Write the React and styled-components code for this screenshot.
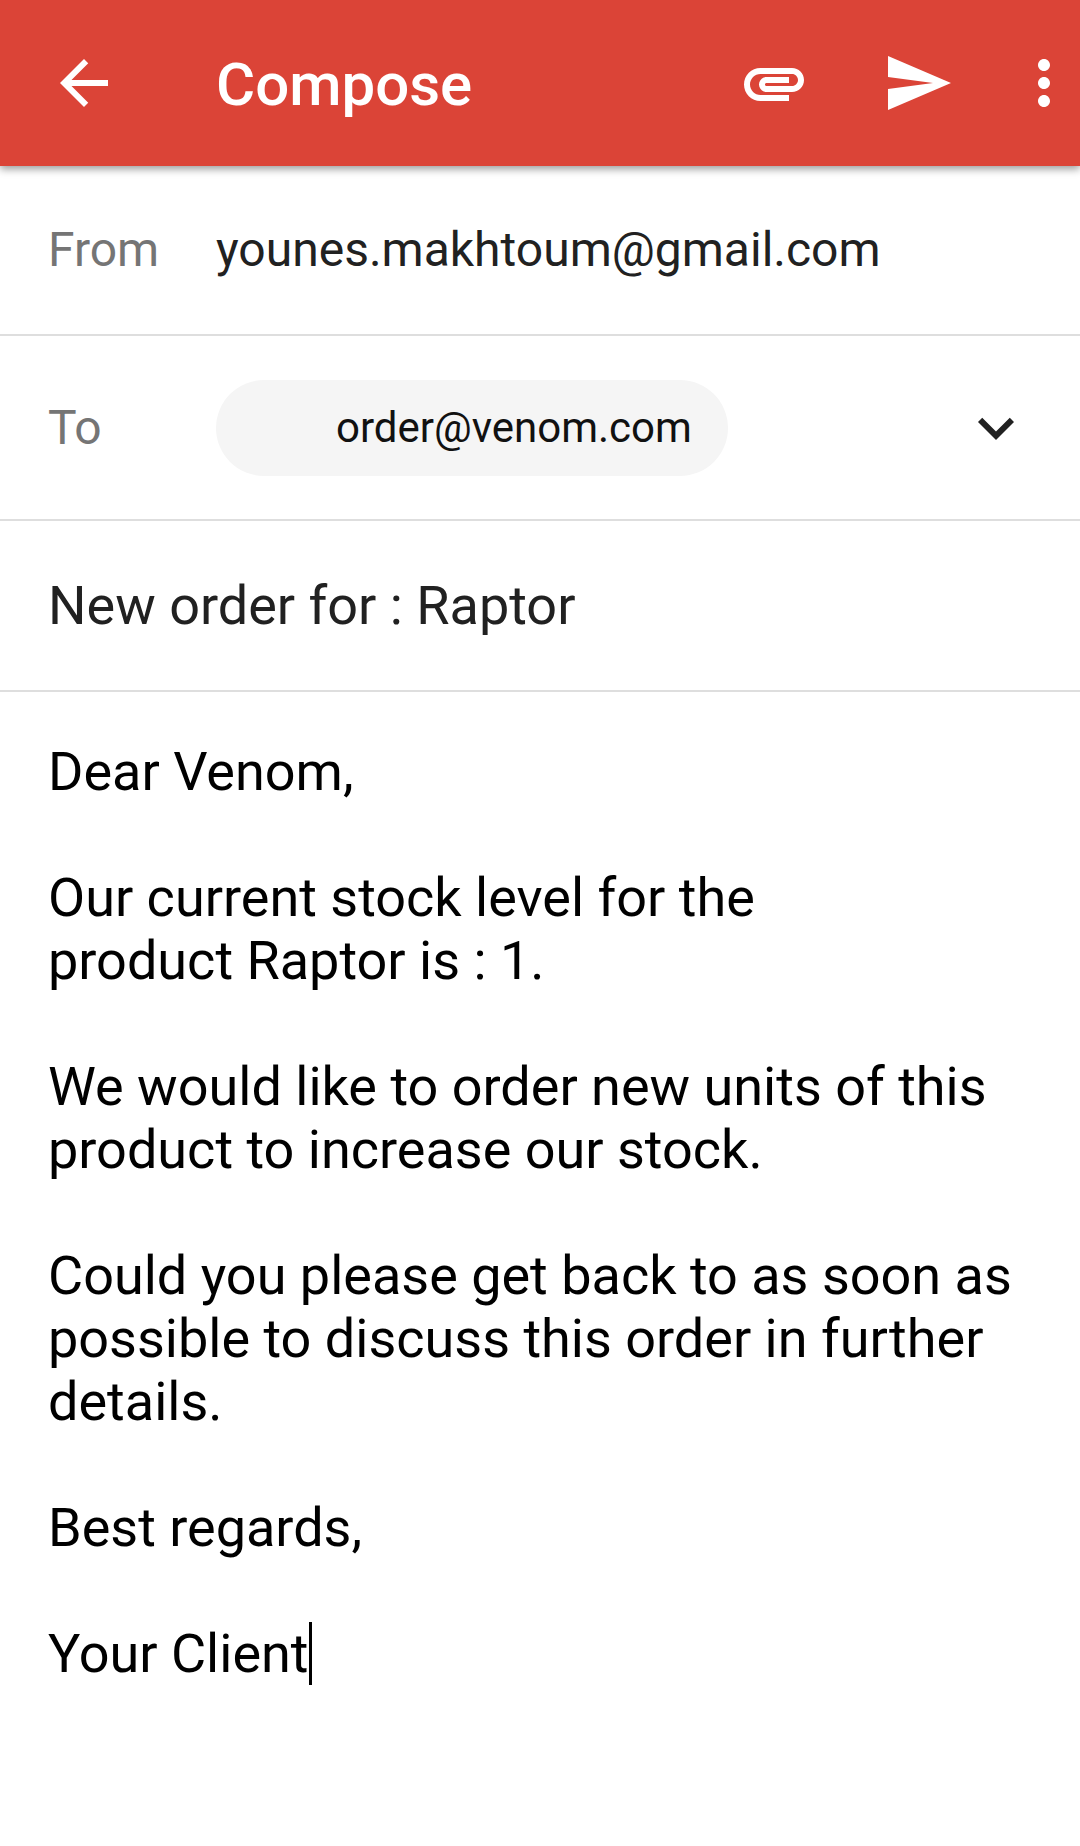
import React from "react";
import styled, { createGlobalStyle } from "styled-components";

const Global = createGlobalStyle`
  * { box-sizing: border-box; }
  body { margin: 0; background: #fff; }
`;
const Screen = styled.main`
  display: flex; flex-direction: column;
  width: 1080px; height: 1846px; overflow: hidden;
  background: #fff; color: #212121;
  font-family: Roboto, "Liberation Sans", sans-serif;
`;
const Toolbar = styled.header`
  display: flex; align-items: center; flex: none;
  height: 166px; padding-left: 48px;
  background: #db4437; color: #fff;
  box-shadow: 0 3px 8px rgba(0, 0, 0, 0.4);
`;
const Icon = styled.svg`
  display: block; flex: none; fill: currentColor;
  width: ${(p) => p.$size || 72}px; height: ${(p) => p.$size || 72}px;
  margin-left: ${(p) => p.$gap || 0}px;
`;
const Title = styled.h1`
  flex: 1; margin: 4px 0 0 96px;
  font-size: 60px; line-height: 70px; font-weight: 500;
`;
const Row = styled.section`
  display: flex; align-items: center; flex: none;
  height: ${(p) => p.$height}px; padding: 0 48px;
  border-bottom: 2px solid #dedede;
`;
const Label = styled.span`
  width: 168px; font-size: 48px; line-height: 56px; color: #757575;
`;
const Address = styled.span`
  font-size: 48px; line-height: 56px;
`;
const Chip = styled.span`
  display: flex; align-items: center;
  width: 512px; height: 96px; padding-left: 120px; border-radius: 48px;
  background: #f5f5f5; color: #111; font-size: 42px;
`;
const Subject = styled.h2`
  margin: 0; font-size: 54px; line-height: 63px; font-weight: 400;
`;
const Message = styled.article`
  padding: 48px 48px 0; color: #000; font-size: 54px; line-height: 63px;
`;
const Line = styled.div`
  display: flex; height: 63px; white-space: pre;
`;
const Caret = styled.i`
  width: 3px; height: 63px; background: #000;
`;

const lines = [
  "Dear Venom,", "",
  "Our current stock level for the", "product Raptor is : 1.", "",
  "We would like to order new units of this", "product to increase our stock.", "",
  "Could you please get back to as soon as", "possible to discuss this order in further", "details.", "",
  "Best regards,", "", "Your Client",
];

export default function App() {
  return (
    <Screen>
      <Global />
      <Toolbar>
        <Icon viewBox="0 0 24 24"><path d="M20 11H7.83l5.59-5.59L12 4l-8 8 8 8 1.41-1.41L7.83 13H20v-2z" /></Icon>
        <Title>Compose</Title>
        <Icon viewBox="0 0 24 24"><path d="M2 12.5C2 9.46 4.46 7 7.5 7H18c2.21 0 4 1.79 4 4s-1.79 4-4 4H9.5C8.12 15 7 13.88 7 12.5S8.12 10 9.5 10H17v2H9.41c-.55 0-.55 1 0 1H18c1.1 0 2-.9 2-2s-.9-2-2-2H7.5C5.57 9 4 10.57 4 12.5S5.57 16 7.5 16H17v2H7.5C4.46 18 2 15.54 2 12.5z" /></Icon>
        <Icon $gap={72} viewBox="0 0 24 24"><path d="M2.01 21L23 12 2.01 3 2 10l15 2-15 2z" /></Icon>
        <Icon $gap={54} viewBox="0 0 24 24"><path d="M12 8c1.1 0 2-.9 2-2s-.9-2-2-2-2 .9-2 2 .9 2 2 2zm0 2c-1.1 0-2 .9-2 2s.9 2 2 2 2-.9 2-2-.9-2-2-2zm0 6c-1.1 0-2 .9-2 2s.9 2 2 2 2-.9 2-2-.9-2-2-2z" /></Icon>
      </Toolbar>
      <Row $height={170}><Label>From</Label><Address>younes.makhtoum@gmail.com</Address></Row>
      <Row $height={185}>
        <Label>To</Label><Chip>order@venom.com</Chip>
        <Icon $gap={232} viewBox="0 0 24 24"><path d="M7.41 8.59L12 13.17l4.59-4.58L18 10l-6 6-6-6 1.41-1.41z" /></Icon>
      </Row>
      <Row $height={171}><Subject>New order for : Raptor</Subject></Row>
      <Message>
        {lines.map((text, i) => (
          <Line key={i}>{text}{i === lines.length - 1 && <Caret />}</Line>
        ))}
      </Message>
    </Screen>
  );
}
